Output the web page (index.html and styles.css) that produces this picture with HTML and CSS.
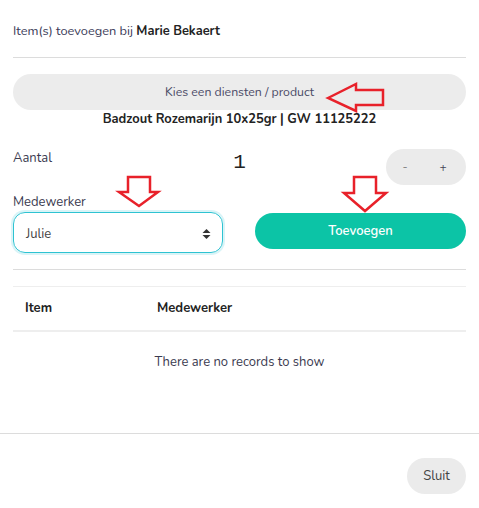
FILE: index.html
```html
<!DOCTYPE html>
<html lang="nl">
<head>
<meta charset="utf-8">
<title>Item toevoegen</title>
<link rel="stylesheet" href="styles.css">
</head>
<body>
<div class="modal">
  <div class="modal-header">
    <div class="title">Item(s) toevoegen bij <strong>Marie Bekaert</strong></div>
  </div>
  <div class="modal-body">
    <button class="picker">Kies een diensten / product</button>
    <div class="product">Badzout Rozemarijn 10x25gr | GW 11125222</div>
    <div class="qty-row">
      <div class="label">Aantal</div>
      <div class="qty-value">1</div>
      <div class="stepper"><span class="minus">-</span><span class="plus">+</span></div>
    </div>
    <div class="emp-row">
      <div class="emp-col">
        <div class="label">Medewerker</div>
        <div class="select">
          <span>Julie</span>
          <svg class="caret" width="9" height="12" viewBox="0 0 9 12"><path d="M4.5 1 L8.5 5 H0.5 Z M4.5 11 L8.5 7 H0.5 Z" fill="#333"/></svg>
        </div>
      </div>
      <button class="add">Toevoegen</button>
    </div>
    <div class="sep"></div>
    <table class="items">
      <thead>
        <tr><th class="c-item">Item</th><th>Medewerker</th></tr>
      </thead>
      <tbody>
        <tr><td colspan="2" class="empty">There are no records to show</td></tr>
      </tbody>
    </table>
  </div>
  <div class="modal-footer">
    <button class="close">Sluit</button>
  </div>
</div>
<svg class="annot" width="479" height="508" viewBox="0 0 479 508">
  <g fill="none" stroke="#e8212a" stroke-width="2.5" stroke-linejoin="miter">
    <polygon points="328,98 356,84 356,90 383,90 383,105 356,105 356,111"/>
    <polygon points="128,177 150,177 150,192 158,192 139,206 119,192 128,192"/>
    <polygon points="354,177 376,177 376,193 386,193 365,211 344,193 354,193"/>
  </g>
</svg>
</body>
</html>
```
FILE: styles.css
```css
* { box-sizing: border-box; }
html, body { margin: 0; padding: 0; background: #fff; }
body {
  font-family: "Nunito", "Lato", "Noto Sans", sans-serif;
  font-size: 13px;
  color: #333;
  position: relative;
  width: 479px;
  height: 508px;
  overflow: hidden;
}
button { font-family: inherit; font-size: 13px; border: 0; cursor: pointer; }

.modal-header { padding: 22px 13px 0; }
.title {
  line-height: 18px;
  color: #3b3b58;
  padding-bottom: 17px;
  border-bottom: 1px solid #dcdcdc;
  font-size: 12.8px;
}
.title strong { color: #222; font-weight: 700; }

.modal-body { padding: 16px 13px 42px; }

.picker {
  display: block;
  width: 100%;
  height: 36px;
  border-radius: 18px;
  background: #ececec;
  color: #4a4a66;
  text-align: center;
  font-size: 12.3px;
}
.product {
  text-align: center;
  font-weight: 700;
  color: #222;
  line-height: 18px;
  font-size: 12.9px;
}

.qty-row {
  margin-top: 21px;
  display: grid;
  grid-template-columns: 1fr auto 1fr;
  align-items: start;
}
.label { line-height: 18px; color: #3b3b50; }
.qty-value {
  font-family: "Liberation Mono", monospace;
  font-size: 21px;
  line-height: 22px;
  color: #222;
  padding-top: 3px;
}
.stepper {
  justify-self: end;
  width: 80px;
  height: 36px;
  border-radius: 18px;
  background: #ebebeb;
  display: flex;
  align-items: center;
  padding: 0 4px 0 0;
  font-size: 12px;
}
.stepper span { width: 38px; text-align: center; }
.minus { color: #888; }
.plus { color: #445; }

.emp-row {
  margin-top: 8px;
  display: grid;
  grid-template-columns: 210px 211px;
  justify-content: space-between;
  align-items: end;
}
.emp-col .label { margin-bottom: 1px; }
.select {
  height: 41px;
  border: 1px solid #2ec3d2;
  border-radius: 12px;
  box-shadow: 0 0 0 2px rgba(46, 195, 210, 0.18);
  display: flex;
  align-items: center;
  justify-content: space-between;
  padding: 2px 11px 0 12px;
  color: #444;
}
.caret { display: block; }
.add {
  height: 36px;
  margin-bottom: 4px;
  border-radius: 18px;
  background: #0cc4a6;
  color: #fff;
  font-weight: 600;
}

.sep { margin-top: 16px; border-top: 1px solid #dcdcdc; }

.items {
  width: 100%;
  margin-top: 16px;
  border-collapse: collapse;
}
.items thead tr { border-top: 1px solid #eeeeee; border-bottom: 2px solid #eeeeee; }
.items th {
  text-align: left;
  font-weight: 700;
  color: #222;
  height: 44px;
  padding: 0 12px;
}
.items th.c-item { width: 132px; }
.empty {
  text-align: center;
  padding: 21px 0 20px;
  line-height: 18px;
  color: #3b3b50;
}

.modal-footer {
  border-top: 1px solid #dcdcdc;
  padding: 24px 13px;
  display: flex;
  justify-content: flex-end;
}
.close {
  width: 59px;
  height: 36px;
  border-radius: 18px;
  background: #ebebeb;
  color: #444;
}

.annot { position: absolute; left: 0; top: 0; pointer-events: none; }
```
